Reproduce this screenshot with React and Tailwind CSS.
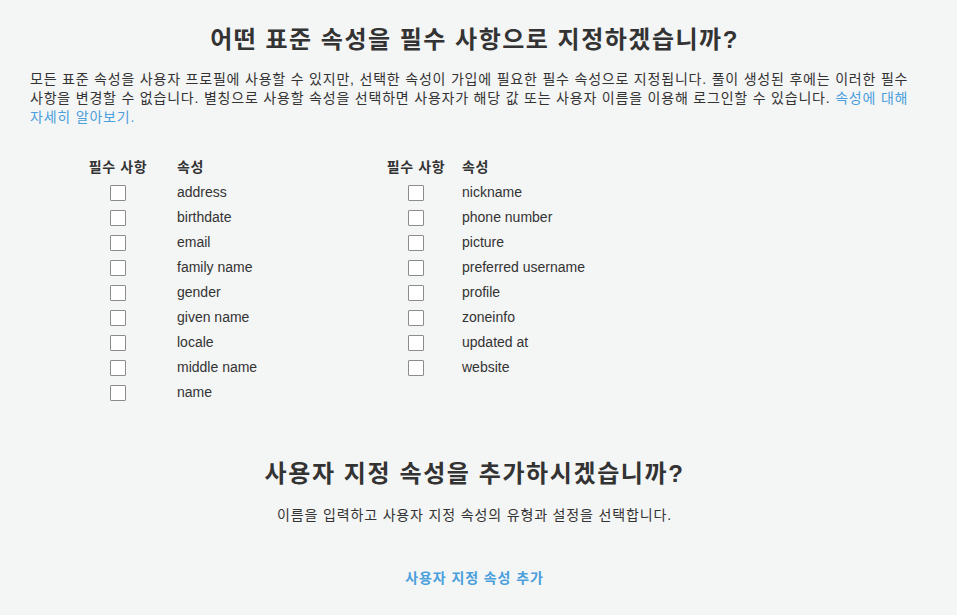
import React from "react";

const left = ["address","birthdate","email","family name","gender","given name","locale","middle name","name"];
const right = ["nickname","phone number","picture","preferred username","profile","zoneinfo","updated at","website"];

function Box() {
  return <div className="w-4 h-4 border border-[#8c8c8c] bg-white rounded-[1px]" />;
}

function Table({ items, gap, width }) {
  return (
    <div className={`grid ${gap} ${width} auto-rows-[25px] items-center content-start`} style={{ gridTemplateColumns: "60px 1fr" }}>
      <div className="font-bold text-center whitespace-nowrap tracking-[0.6px]">필수 사항</div>
      <div className="font-bold tracking-[0.6px]">속성</div>
      {items.map((it) => (
        <React.Fragment key={it}>
          <div className="flex justify-center"><Box /></div>
          <div className="whitespace-nowrap">{it}</div>
        </React.Fragment>
      ))}
    </div>
  );
}

export default function App() {
  return (
    <div
      className="min-h-[615px] bg-[#f4f5f5] text-[#333333] text-[14px] pl-[30px] pr-[38px] pt-[24px]"
      style={{ fontFamily: '"Liberation Sans", Arial, "Noto Sans CJK KR", sans-serif' }}
    >
      <h1 className="text-[24px] leading-[32px] font-bold text-center tracking-[1.5px]">어떤 표준 속성을 필수 사항으로 지정하겠습니까?</h1>
      <p className="mt-[14px] leading-[19px] tracking-[0.8px] flex flex-col">
        <span className="whitespace-nowrap">모든 표준 속성을 사용자 프로필에 사용할 수 있지만, 선택한 속성이 가입에 필요한 필수 속성으로 지정됩니다. 풀이 생성된 후에는 이러한 필수</span>
        <span className="whitespace-nowrap">사항을 변경할 수 없습니다. 별칭으로 사용할 속성을 선택하면 사용자가 해당 값 또는 사용자 이름을 이용해 로그인할 수 있습니다. <a className="text-[#4a9fdc]">속성에 대해</a></span>
        <span className="whitespace-nowrap"><a className="text-[#4a9fdc]">자세히 알아보기.</a></span>
      </p>
      <div className="flex mt-[28px] pl-[58px]">
        <Table items={left} gap="gap-x-[29px]" width="w-[298px]" />
        <Table items={right} gap="gap-x-[16px]" width="w-[300px]" />
      </div>
      <h2 className="mt-[53px] text-[24px] leading-[32px] font-bold text-center tracking-[1.6px]">사용자 지정 속성을 추가하시겠습니까?</h2>
      <p className="mt-[16px] leading-[19px] text-center tracking-[0.85px]">이름을 입력하고 사용자 지정 속성의 유형과 설정을 선택합니다.</p>
      <div className="mt-[44px] leading-[19px] text-center tracking-[0.9px]">
        <a className="font-bold text-[#4a9fdc]">사용자 지정 속성 추가</a>
      </div>
    </div>
  );
}
